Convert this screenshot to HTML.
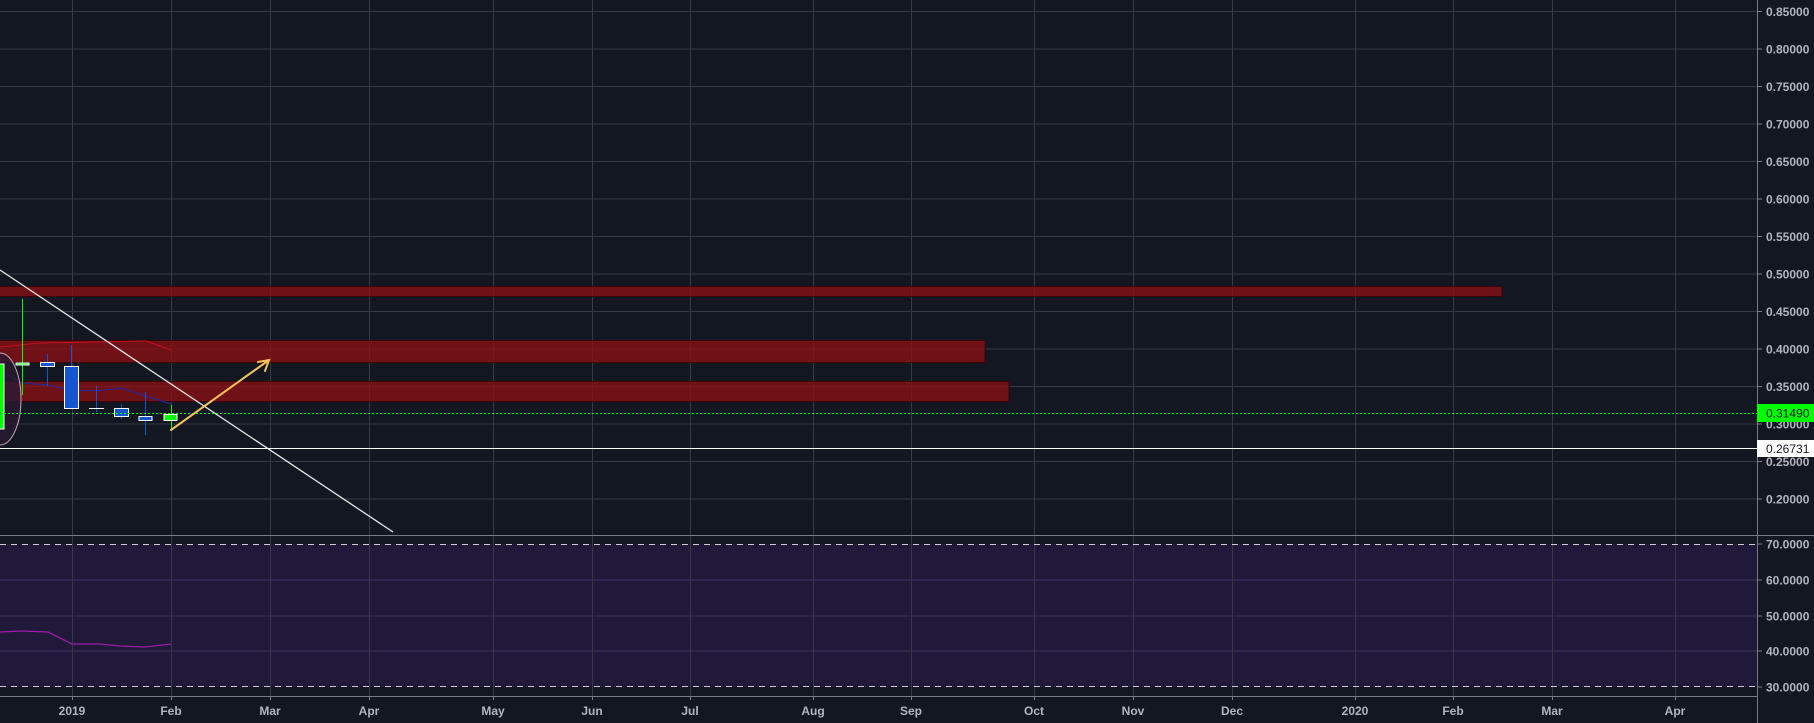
<!DOCTYPE html>
<html><head><meta charset="utf-8"><style>
html,body{margin:0;padding:0;background:#131722;width:1814px;height:723px;overflow:hidden}
svg{display:block}
text{font-family:"Liberation Sans",sans-serif;font-size:12px;font-weight:bold;fill:#b2b5be}
</style></head><body>
<svg width="1814" height="723" viewBox="0 0 1814 723" xmlns="http://www.w3.org/2000/svg">
<rect width="1814" height="723" fill="#131722"/>
<!-- RSI background -->
<rect x="0" y="544" width="1757" height="143" fill="#21193a"/>
<!-- price horizontal grid -->
<g stroke="#363a45" stroke-width="1">
<line x1="0" y1="11.5" x2="1757" y2="11.5"/><line x1="0" y1="49" x2="1757" y2="49"/><line x1="0" y1="86.5" x2="1757" y2="86.5"/><line x1="0" y1="124" x2="1757" y2="124"/><line x1="0" y1="161.5" x2="1757" y2="161.5"/><line x1="0" y1="199" x2="1757" y2="199"/><line x1="0" y1="236.5" x2="1757" y2="236.5"/><line x1="0" y1="274" x2="1757" y2="274"/><line x1="0" y1="311.5" x2="1757" y2="311.5"/><line x1="0" y1="349" x2="1757" y2="349"/><line x1="0" y1="386.5" x2="1757" y2="386.5"/><line x1="0" y1="424" x2="1757" y2="424"/><line x1="0" y1="461.5" x2="1757" y2="461.5"/><line x1="0" y1="499" x2="1757" y2="499"/>
</g>
<g stroke="#3d3461"><line x1="0" y1="580" x2="1757" y2="580"/><line x1="0" y1="616" x2="1757" y2="616"/><line x1="0" y1="651" x2="1757" y2="651"/></g>
<!-- vertical grid -->
<g stroke="#363a45">
<line x1="72.5" y1="0" x2="72.5" y2="700"/><line x1="171.5" y1="0" x2="171.5" y2="700"/><line x1="270.5" y1="0" x2="270.5" y2="700"/><line x1="369.5" y1="0" x2="369.5" y2="700"/><line x1="493.5" y1="0" x2="493.5" y2="700"/><line x1="592.5" y1="0" x2="592.5" y2="700"/><line x1="690.5" y1="0" x2="690.5" y2="700"/><line x1="813.5" y1="0" x2="813.5" y2="700"/><line x1="911.5" y1="0" x2="911.5" y2="700"/><line x1="1034.5" y1="0" x2="1034.5" y2="700"/><line x1="1133.5" y1="0" x2="1133.5" y2="700"/><line x1="1232.5" y1="0" x2="1232.5" y2="700"/><line x1="1355.5" y1="0" x2="1355.5" y2="700"/><line x1="1453.5" y1="0" x2="1453.5" y2="700"/><line x1="1552.5" y1="0" x2="1552.5" y2="700"/><line x1="1675.5" y1="0" x2="1675.5" y2="700"/>
</g>
<!-- red zones -->
<g fill="#8b0f14" fill-opacity="0.78" stroke="#3d0205" stroke-width="1">
<rect x="-2" y="286.5" width="1504" height="10"/>
<rect x="-2" y="340.5" width="987" height="22"/>
<rect x="-2" y="381.5" width="1011" height="20"/>
</g>
<!-- MA lines -->
<polyline points="0,347 40,343 146,341 171,350" fill="none" stroke="#c4101a" stroke-width="1"/>
<polyline points="0,370 22,383 47,385 71,390 96,391 121,388 171,404" fill="none" stroke="#1d2aa6" stroke-width="1"/>
<!-- ellipse -->
<ellipse cx="0" cy="399" rx="21" ry="46" fill="#2a1a34" fill-opacity="0.8" stroke="#c9a6b9" stroke-width="1"/>
<!-- candles -->
<rect x="-1" y="364" width="5" height="65" fill="#00ff00" stroke="#fff"/>
<line x1="22.5" y1="299" x2="22.5" y2="395" stroke="#00ff00"/>
<rect x="16" y="363" width="13" height="2" fill="#00ff00" stroke="#fff"/>
<line x1="47.5" y1="354" x2="47.5" y2="386" stroke="#1555d0"/>
<rect x="40.5" y="362.5" width="14" height="4" fill="#1555d0" stroke="#fff"/>
<line x1="71.5" y1="345" x2="71.5" y2="408" stroke="#1555d0"/>
<rect x="64.5" y="366.5" width="14" height="42" fill="#1555d0" stroke="#fff"/>
<line x1="96.5" y1="386" x2="96.5" y2="412" stroke="#1555d0"/>
<line x1="89" y1="408.5" x2="104" y2="408.5" stroke="#fff"/>
<line x1="121.5" y1="404" x2="121.5" y2="419" stroke="#1555d0"/>
<rect x="114.5" y="408.5" width="14" height="8" fill="#1555d0" stroke="#fff"/>
<line x1="145.5" y1="392" x2="145.5" y2="435" stroke="#1555d0"/>
<rect x="139" y="416.5" width="13" height="4" fill="#1555d0" stroke="#fff"/>
<line x1="171.5" y1="405" x2="171.5" y2="431" stroke="#00ff00"/>
<rect x="164" y="414.5" width="13" height="6" fill="#00ff00" stroke="#fff"/>
<!-- current price line -->
<line x1="0" y1="413.5" x2="1757" y2="413.5" stroke="#00ff00" stroke-dasharray="2,2"/>
<!-- horizontal white -->
<line x1="0" y1="448.5" x2="1757" y2="448.5" stroke="#ffffff"/>
<!-- diagonal -->
<line x1="0" y1="270" x2="393" y2="532" stroke="#e6e6e6" stroke-width="1.3"/>
<!-- arrow -->
<g stroke="#f5c35a" stroke-width="2" fill="none" stroke-linecap="round">
<line x1="171" y1="430" x2="269" y2="360"/>
<polyline points="258,362 269,360 265,371"/>
</g>
<!-- pane separator & RSI bands -->
<line x1="0" y1="535.5" x2="1814" y2="535.5" stroke="#787b86"/>
<line x1="0" y1="544.5" x2="1757" y2="544.5" stroke="#d1c8d8" stroke-dasharray="6,5"/>
<line x1="0" y1="686.5" x2="1757" y2="686.5" stroke="#d1c8d8" stroke-dasharray="6,5"/>
<polyline points="0,632 22,631 48,632 72,644 100,644 120,646 145,647 171,644" fill="none" stroke="#9c1aa8" stroke-width="1.3"/>
<!-- axes -->
<line x1="1757.5" y1="0" x2="1757.5" y2="723" stroke="#787b86"/>
<line x1="0" y1="696.5" x2="1757" y2="696.5" stroke="#787b86"/>
<g stroke="#787b86">
<line x1="1757" y1="11.5" x2="1762" y2="11.5"/><line x1="1757" y1="49" x2="1762" y2="49"/><line x1="1757" y1="86.5" x2="1762" y2="86.5"/><line x1="1757" y1="124" x2="1762" y2="124"/><line x1="1757" y1="161.5" x2="1762" y2="161.5"/><line x1="1757" y1="199" x2="1762" y2="199"/><line x1="1757" y1="236.5" x2="1762" y2="236.5"/><line x1="1757" y1="274" x2="1762" y2="274"/><line x1="1757" y1="311.5" x2="1762" y2="311.5"/><line x1="1757" y1="349" x2="1762" y2="349"/><line x1="1757" y1="386.5" x2="1762" y2="386.5"/><line x1="1757" y1="424" x2="1762" y2="424"/><line x1="1757" y1="461.5" x2="1762" y2="461.5"/><line x1="1757" y1="499" x2="1762" y2="499"/>
<line x1="1757" y1="544" x2="1762" y2="544"/><line x1="1757" y1="580" x2="1762" y2="580"/><line x1="1757" y1="616" x2="1762" y2="616"/><line x1="1757" y1="651" x2="1762" y2="651"/><line x1="1757" y1="687" x2="1762" y2="687"/>
</g>
<g>
<text x="1766" y="16">0.85000</text><text x="1766" y="53.5">0.80000</text><text x="1766" y="91">0.75000</text><text x="1766" y="128.5">0.70000</text><text x="1766" y="166">0.65000</text><text x="1766" y="203.5">0.60000</text><text x="1766" y="241">0.55000</text><text x="1766" y="278.5">0.50000</text><text x="1766" y="316">0.45000</text><text x="1766" y="353.5">0.40000</text><text x="1766" y="391">0.35000</text><text x="1766" y="428.5">0.30000</text><text x="1766" y="466">0.25000</text><text x="1766" y="503.5">0.20000</text>
<text x="1766" y="548.5">70.0000</text><text x="1766" y="584.5">60.0000</text><text x="1766" y="620.5">50.0000</text><text x="1766" y="655.5">40.0000</text><text x="1766" y="691.5">30.0000</text>
</g>
<rect x="1757" y="404" width="57" height="18" fill="#00ff00"/>
<text x="1766" y="417.5" style="fill:#131722;font-weight:normal">0.31490</text>
<rect x="1757" y="440" width="57" height="17" fill="#ffffff"/>
<text x="1766" y="453" style="fill:#131722;font-weight:normal">0.26731</text>
<g stroke="#787b86">
<line x1="72.5" y1="696" x2="72.5" y2="700"/><line x1="171.5" y1="696" x2="171.5" y2="700"/><line x1="270.5" y1="696" x2="270.5" y2="700"/><line x1="369.5" y1="696" x2="369.5" y2="700"/><line x1="493.5" y1="696" x2="493.5" y2="700"/><line x1="592.5" y1="696" x2="592.5" y2="700"/><line x1="690.5" y1="696" x2="690.5" y2="700"/><line x1="813.5" y1="696" x2="813.5" y2="700"/><line x1="911.5" y1="696" x2="911.5" y2="700"/><line x1="1034.5" y1="696" x2="1034.5" y2="700"/><line x1="1133.5" y1="696" x2="1133.5" y2="700"/><line x1="1232.5" y1="696" x2="1232.5" y2="700"/><line x1="1355.5" y1="696" x2="1355.5" y2="700"/><line x1="1453.5" y1="696" x2="1453.5" y2="700"/><line x1="1552.5" y1="696" x2="1552.5" y2="700"/><line x1="1675.5" y1="696" x2="1675.5" y2="700"/>
</g>
<g text-anchor="middle">
<text x="72" y="715">2019</text><text x="171" y="715">Feb</text><text x="270" y="715">Mar</text><text x="369" y="715">Apr</text><text x="493" y="715">May</text><text x="592" y="715">Jun</text><text x="690" y="715">Jul</text><text x="813" y="715">Aug</text><text x="911" y="715">Sep</text><text x="1034" y="715">Oct</text><text x="1133" y="715">Nov</text><text x="1232" y="715">Dec</text><text x="1355" y="715">2020</text><text x="1453" y="715">Feb</text><text x="1552" y="715">Mar</text><text x="1675" y="715">Apr</text>
</g>
</svg>
</body></html>
